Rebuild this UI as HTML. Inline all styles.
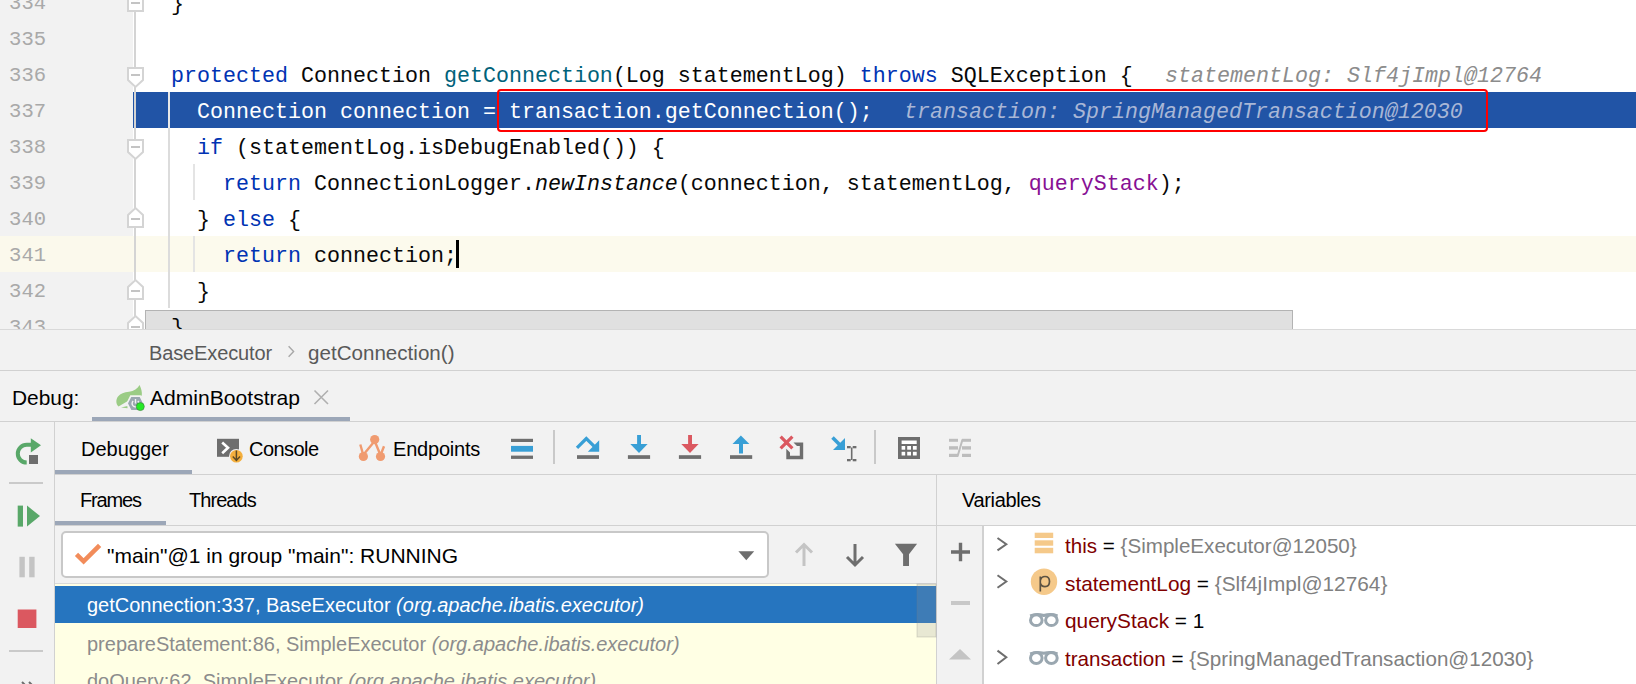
<!DOCTYPE html>
<html><head><meta charset="utf-8">
<style>
*{margin:0;padding:0;box-sizing:border-box}
html,body{width:1636px;height:684px;overflow:hidden;background:#f2f2f2}
body{position:relative;font-family:"Liberation Sans",sans-serif;font-size:20px;color:#000}
.a{position:absolute}
.t{position:absolute;white-space:pre;line-height:20px}
/* editor */
#ed{position:absolute;left:0;top:0;width:1636px;height:329px;background:#fff;overflow:hidden}
#gut{position:absolute;left:0;top:0;width:133px;height:329px;background:#f2f2f2}
.ln{position:absolute;left:0;width:46px;text-align:right;font-family:"Liberation Mono",monospace;font-size:20.5px;line-height:36px;color:#a9a9a9;white-space:pre}
.cl{position:absolute;left:171px;font-family:"Liberation Mono",monospace;font-size:21.67px;line-height:36px;color:#080808;white-space:pre}
.k{color:#0033b3}.m{color:#00627a}.f{color:#871094}.i{font-style:italic}
.hint{position:absolute;font-family:"Liberation Mono",monospace;font-size:21.67px;line-height:36px;color:#8c8c8c;font-style:italic;white-space:pre}
</style></head><body>
<div id="ed">
  <div id="gut"></div>
  <!-- caret row -->
  <div class="a" style="left:0;top:236px;width:133px;height:36px;background:#fbf9ec"></div>
  <div class="a" style="left:133px;top:236px;width:1503px;height:36px;background:#fcfaed"></div>
  <!-- execution row -->
  <div class="a" style="left:133px;top:92px;width:1503px;height:36px;background:#2154a6"></div>

  <!-- line numbers -->
  <div class="ln" style="top:-14px">334</div>
  <div class="ln" style="top:22px">335</div>
  <div class="ln" style="top:58px">336</div>
  <div class="ln" style="top:94px">337</div>
  <div class="ln" style="top:130px">338</div>
  <div class="ln" style="top:166px">339</div>
  <div class="ln" style="top:202px">340</div>
  <div class="ln" style="top:238px">341</div>
  <div class="ln" style="top:274px">342</div>
  <div class="ln" style="top:310px">343</div>

  <!-- code -->
  <div class="cl" style="top:-13px">}</div>
  <div class="cl" style="top:59px"><span class="k">protected</span> Connection <span class="m">getConnection</span>(Log statementLog) <span class="k">throws</span> SQLException {</div>
  <div class="hint" style="left:1165px;top:59px">statementLog: Slf4jImpl@12764</div>
  <div class="cl" style="top:95px;color:#fff">  Connection connection = transaction.getConnection();</div>
  <div class="hint" style="left:904px;top:95px;color:#a9b7d6">transaction: SpringManagedTransaction@12030</div>
  <div class="cl" style="top:131px">  <span class="k">if</span> (statementLog.isDebugEnabled()) {</div>
  <div class="cl" style="top:167px">    <span class="k">return</span> ConnectionLogger.<span class="i">newInstance</span>(connection, statementLog, <span class="f">queryStack</span>);</div>
  <div class="cl" style="top:203px">  } <span class="k">else</span> {</div>
  <div class="cl" style="top:239px">    <span class="k">return</span> connection;</div>
  <div class="cl" style="top:275px">  }</div>
  <div class="cl" style="top:311px">}</div>

  
<!-- gutter fold outline -->
<div class="a" style="left:134px;top:0;width:2px;height:325px;background:#d4d4d4"></div>
<svg class="a" style="left:0;top:0" width="160" height="329" viewBox="0 0 160 329">
  <g fill="#fff" stroke="#d4d4d4" stroke-width="2">
    <!-- 334 end marker (up) -->
    <path d="M128 -6 L135 -13 L143 -6 L143 11 L128 11 Z"/>
    <!-- 336 start (down) -->
    <path d="M128 68 L143 68 L143 80 L135.5 87 L128 80 Z"/>
    <!-- 338 start (down) -->
    <path d="M128 140 L143 140 L143 152 L135.5 159 L128 152 Z"/>
    <!-- 340 end (up) -->
    <path d="M128 227 L128 215 L135.5 208 L143 215 L143 227 Z"/>
    <!-- 342 end (up) -->
    <path d="M128 299 L128 287 L135.5 280 L143 287 L143 299 Z"/>
    <!-- 343 end (up) -->
    <path d="M128 335 L128 323 L135.5 316 L143 323 L143 335 Z"/>
  </g>
  <g stroke="#c4c4c4" stroke-width="2">
    <path d="M131 3 H140"/><path d="M131 75 H140"/><path d="M131 147 H140"/>
    <path d="M131 219 H140"/><path d="M131 291 H140"/><path d="M131 327 H140"/>
  </g>
</svg>

  
<!-- indent guides -->
<div class="a" style="left:168px;top:92px;width:2px;height:216px;background:#dcdcdc"></div>
<div class="a" style="left:168px;top:92px;width:2px;height:36px;background:#e8e8e8"></div>
<div class="a" style="left:193px;top:164px;width:2px;height:36px;background:#e4e4e4"></div>
<div class="a" style="left:193px;top:236px;width:2px;height:36px;background:#e4e4e4"></div>

  <!-- caret -->
  <div class="a" style="left:456px;top:240px;width:3px;height:28px;background:#000"></div>

  <!-- red annotation box -->
  <div class="a" style="left:497px;top:89px;width:991px;height:43px;border:2px solid #ff0000;border-radius:4px"></div>

  <!-- scrollbar thumb -->
  <div class="a" style="left:145px;top:310px;width:1148px;height:19px;background:rgba(0,0,0,0.12);border:1px solid rgba(0,0,0,0.2);border-bottom:none"></div>
</div>
<div class="a" style="left:0;top:329px;width:1636px;height:1px;background:#d9d9d9"></div>

<!-- breadcrumbs -->
<div class="t" style="left:149px;top:343px;color:#595959;letter-spacing:-0.12px">BaseExecutor</div>
<div class="t" style="left:308px;top:343px;color:#595959;font-size:20.6px">getConnection()</div>
<div class="a" style="left:0;top:370px;width:1636px;height:1px;background:#d1d1d1"></div>


<!-- Debug tab bar -->
<div class="t" style="left:12px;top:388px;font-size:20.9px">Debug:</div>
<svg class="a" style="left:112px;top:382px" width="36" height="32" viewBox="0 0 36 32">
  <path d="M27.6 2.9 C29.5 7 30.2 10 29.8 13.5 L15 19.5 L6.5 24.5 C4 22 3.5 18 6 14.5 C8.5 11.5 12 10.5 17 9.8 C22 8.8 25.5 6.5 27.6 2.9 Z" fill="#9bcc85"/>
  <path d="M9 25.6 L15.5 24 L15.5 26.2 Z" fill="#9bcc85"/>
  <path d="M15.1 21.4 L18.8 14.1 L28.2 14.1 L31.8 21.4 L28.2 28.7 L18.8 28.7 Z" fill="#9aa7b0" stroke="#f2f2f2" stroke-width="1.6"/>
  <path d="M21.2 19 A3.4 3.4 0 1 0 25.8 19" fill="none" stroke="#f2f2f2" stroke-width="1.4"/>
  <path d="M23.5 17 V21.5" stroke="#f2f2f2" stroke-width="1.4"/>
  <circle cx="28.3" cy="24.6" r="4" fill="#25ea25" stroke="#3a7a3a" stroke-width="0.6"/>
</svg>
<div class="t" style="left:150px;top:388px;font-size:21.1px">AdminBootstrap</div>
<svg class="a" style="left:313px;top:389px" width="17" height="17" viewBox="0 0 17 17"><path d="M1.5 1.5 L15 15 M15 1.5 L1.5 15" stroke="#b0b0b0" stroke-width="1.6"/></svg>
<div class="a" style="left:92px;top:417px;width:258px;height:4px;background:#9ca7b8"></div>
<div class="a" style="left:0;top:421px;width:1636px;height:1px;background:#d1d1d1"></div>

<!-- left vertical toolbar -->
<div class="a" style="left:54px;top:422px;width:1px;height:262px;background:#d1d1d1"></div>

<!-- tabs row -->
<div class="t" style="left:81px;top:439px">Debugger</div>
<div class="t" style="left:249px;top:439px;letter-spacing:-0.55px">Console</div>
<div class="t" style="left:393px;top:439px;letter-spacing:-0.2px">Endpoints</div>
<div class="a" style="left:55px;top:470px;width:137px;height:4px;background:#9ca7b8"></div>
<div class="a" style="left:55px;top:474px;width:1581px;height:1px;background:#d1d1d1"></div>

<!-- frames/threads header -->
<div class="t" style="left:80px;top:490px;letter-spacing:-1.15px">Frames</div>
<div class="t" style="left:189px;top:490px;letter-spacing:-0.95px">Threads</div>
<div class="a" style="left:55px;top:521px;width:111px;height:4px;background:#9ca7b8"></div>
<div class="a" style="left:55px;top:525px;width:1581px;height:1px;background:#d1d1d1"></div>
<div class="a" style="left:936px;top:475px;width:1px;height:209px;background:#d1d1d1"></div>
<div class="t" style="left:962px;top:490px;letter-spacing:-0.35px">Variables</div>

<!-- thread combo -->
<div class="a" style="left:61px;top:531px;width:708px;height:47px;background:#fff;border:2px solid #c8c8c8;border-radius:5px"></div>
<div class="t" style="left:107px;top:546px;font-size:21px">"main"@1 in group "main": RUNNING</div>
<div class="a" style="left:55px;top:583px;width:881px;height:1px;background:#dadada"></div>

<!-- frames list -->
<div class="a" style="left:55px;top:584px;width:881px;height:100px;background:#ffffe4"></div>
<div class="a" style="left:55px;top:586px;width:881px;height:37px;background:#2675bf"></div>
<div class="t" style="left:87px;top:595px;color:#fff">getConnection:337, BaseExecutor <i>(org.apache.ibatis.executor)</i></div>
<div class="t" style="left:87px;top:634px;color:#8c8c8c">prepareStatement:86, SimpleExecutor <i>(org.apache.ibatis.executor)</i></div>
<div class="t" style="left:87px;top:671px;color:#8c8c8c">doQuery:62, SimpleExecutor <i>(org.apache.ibatis.executor)</i></div>

<!-- variables -->
<div class="a" style="left:983px;top:526px;width:653px;height:158px;background:#fff"></div>
<div class="a" style="left:982px;top:526px;width:2px;height:158px;background:#d1d1d1"></div>
<div class="t" style="left:1065px;top:536px;color:#800000;font-size:20.6px">this <span style="color:#000">=</span> <span style="color:#808080">{SimpleExecutor@12050}</span></div>
<div class="t" style="left:1065px;top:574px;color:#800000;font-size:20.8px">statementLog <span style="color:#000">=</span> <span style="color:#808080">{Slf4jImpl@12764}</span></div>
<div class="t" style="left:1065px;top:611px;color:#800000;font-size:20.8px">queryStack <span style="color:#000">= 1</span></div>
<div class="t" style="left:1065px;top:649px;color:#800000;font-size:20.6px">transaction <span style="color:#000">=</span> <span style="color:#808080">{SpringManagedTransaction@12030}</span></div>


<!-- icon overlay -->
<svg class="a" style="left:0;top:0" width="1636" height="684" viewBox="0 0 1636 684">
  <!-- breadcrumb chevron -->
  <path d="M288.6 346.3 L293.6 351.5 L288.6 356.7" fill="none" stroke="#a8a8a8" stroke-width="1.4"/>

  <!-- rerun -->
  <path d="M31.5 444.8 H26.7 A8.9 8.9 0 0 0 26.7 462.6" fill="none" stroke="#59a869" stroke-width="4"/>
  <path d="M30.8 438.2 L41 445.3 L30.8 452.5 Z" fill="#59a869"/>
  <rect x="29" y="455" width="9" height="9" fill="#6e6e6e"/>
  <rect x="9" y="482" width="34" height="2" fill="#cacaca"/>
  <!-- resume -->
  <rect x="17.7" y="505.6" width="5.3" height="21" fill="#59a869"/>
  <path d="M27 505.6 L40 516 L27 526.5 Z" fill="#59a869"/>
  <!-- pause -->
  <rect x="19.4" y="556.8" width="5.4" height="20.5" fill="#c4c4c4"/>
  <rect x="29.2" y="556.8" width="5.4" height="20.5" fill="#c4c4c4"/>
  <!-- stop -->
  <rect x="17.7" y="609.5" width="18.7" height="18.5" fill="#db5860"/>
  <rect x="9" y="650" width="34" height="2" fill="#cacaca"/>
  <!-- >> -->
  <path d="M22 682 L26 686 M29 682 L33 686" stroke="#6e6e6e" stroke-width="2"/>

  <!-- console icon -->
  <rect x="217" y="438.8" width="22" height="18" fill="#6e6e6e"/>
  <path d="M222.2 442.5 L228 447.8 L222.2 453.2" fill="none" stroke="#fff" stroke-width="2.6"/>
  <circle cx="236.4" cy="456.3" r="7.4" fill="#f2f2f2"/>
  <circle cx="236.4" cy="456.3" r="6.3" fill="#f4af3d"/>
  <path d="M236.4 450.5 V460.3 M232.8 456.6 L236.4 460.4 L240 456.6" fill="none" stroke="#5c4a26" stroke-width="1.5"/>

  <!-- endpoints icon -->
  <g fill="#f09b70" stroke="#f09b70">
    <circle cx="374.7" cy="439.6" r="4.6" stroke="none"/>
    <circle cx="363.4" cy="456.5" r="4.6" stroke="none"/>
    <circle cx="380.5" cy="456.5" r="4.6" stroke="none"/>
    <path d="M374.7 441 L364 454 M374.7 441 L380 454 M360.3 444.5 L363 454 M384 446.3 L381 454" stroke-width="2.4" fill="none"/>
  </g>

  <!-- hamburger -->
  <rect x="511" y="438.8" width="22" height="3.2" fill="#6e6e6e"/>
  <rect x="511" y="445.9" width="22" height="5.8" fill="#389fd6"/>
  <rect x="511" y="455.6" width="22" height="3.3" fill="#6e6e6e"/>
  <rect x="553" y="430" width="2" height="34" fill="#c9c9c9"/>

  <!-- step over -->
  <path d="M577 447.8 L586.3 438.5 L594.5 446.7" fill="none" stroke="#389fd6" stroke-width="3.3"/>
  <path d="M599.2 440.2 L599.2 451.8 L587.8 451.8 Z" fill="#389fd6"/>
  <rect x="577" y="455.2" width="22" height="3.7" fill="#6e6e6e"/>

  <!-- step into -->
  <rect x="637.1" y="435" width="3.9" height="10" fill="#389fd6"/>
  <path d="M630.3 444.1 L647.6 444.1 L639 452.9 Z" fill="#389fd6"/>
  <rect x="627.9" y="455.2" width="22.2" height="3.7" fill="#6e6e6e"/>

  <!-- force step into -->
  <rect x="688.1" y="435" width="3.9" height="10" fill="#db5860"/>
  <path d="M681.3 444.1 L698.6 444.1 L690 452.9 Z" fill="#db5860"/>
  <rect x="678.9" y="455.2" width="22.2" height="3.7" fill="#6e6e6e"/>

  <!-- step out -->
  <path d="M732.5 444.1 L749.4 444.1 L740.9 435.6 Z" fill="#389fd6"/>
  <rect x="739" y="443.5" width="4" height="10" fill="#389fd6"/>
  <rect x="730" y="455.2" width="22.2" height="3.7" fill="#6e6e6e"/>

  <!-- drop frame -->
  <path d="M793.5 442.5 L803.2 442.5 L803.2 459.2 L786.3 459.2 L786.3 448.8 L790 452.5 L790 455.8 L799.8 455.8 L799.8 446 L797 446 Z" fill="#6e6e6e"/>
  <path d="M780.6 436.6 L792.4 448.4 M792.4 436.6 L780.6 448.4" stroke="#db5860" stroke-width="3.2"/>

  <!-- run to cursor -->
  <path d="M832.5 437.5 L840 445" stroke="#389fd6" stroke-width="3.6"/>
  <path d="M845 438 L845 450 L833 450 Z" fill="#389fd6"/>
  <g fill="#6e6e6e"><rect x="847" y="446" width="3.7" height="2.3"/><rect x="852.7" y="446" width="3.7" height="2.3"/><rect x="850.9" y="447.5" width="1.6" height="12.5"/><rect x="847" y="459" width="3.7" height="2.3"/><rect x="852.7" y="459" width="3.7" height="2.3"/></g>
  <rect x="874" y="430" width="2" height="34" fill="#c9c9c9"/>

  <!-- calculator -->
  <rect x="898" y="437" width="22" height="22" fill="#6e6e6e"/>
  <rect x="901.6" y="440.5" width="15.1" height="3.5" fill="#fff"/>
  <g fill="#fff">
    <rect x="901.6" y="446" width="3.6" height="3.7"/><rect x="907.2" y="446" width="3.8" height="3.7"/><rect x="912.9" y="446" width="3.8" height="3.7"/>
    <rect x="901.6" y="451.8" width="3.6" height="3.7"/><rect x="907.2" y="451.8" width="3.8" height="3.7"/><rect x="912.9" y="451.8" width="3.8" height="3.7"/>
  </g>

  <!-- trace (disabled) -->
  <g fill="#bdbdbd">
    <rect x="949" y="438.8" width="9" height="3"/><rect x="962" y="438.8" width="9" height="3"/>
    <rect x="949" y="446.2" width="9" height="3.4"/><rect x="962" y="446.2" width="9" height="3.4"/>
    <rect x="949" y="453.8" width="9" height="3.2"/><rect x="962" y="453.8" width="9" height="3.2"/>
  </g>
  <path d="M962.5 439.5 L957.5 456.5" stroke="#bdbdbd" stroke-width="2"/>

  <!-- checkmark -->
  <path d="M76.5 554.3 L83.6 561.3 L99.6 545.3" fill="none" stroke="#f28c5a" stroke-width="4.6"/>
  <!-- dropdown arrow -->
  <path d="M738.4 551.2 L754.2 551.2 L746.3 560.3 Z" fill="#6e6e6e"/>
  <!-- up arrow disabled -->
  <path d="M804 546 V566 M796 552.5 L804 544.5 L812 552.5" fill="none" stroke="#c4c4c4" stroke-width="3"/>
  <!-- down arrow -->
  <path d="M855 544 V564 M847 557 L855 565 L863 557" fill="none" stroke="#6e6e6e" stroke-width="3"/>
  <!-- filter -->
  <path d="M894.9 543.8 L917.1 543.8 L909 554.3 L909 566 L903.1 566 L903.1 554.3 Z" fill="#6e6e6e"/>

  <!-- frames scroll thumb -->
  <rect x="917" y="584" width="19" height="53" fill="rgba(150,150,150,0.22)" stroke="rgba(120,120,120,0.25)" stroke-width="1"/>

  <!-- variables toolbar -->
  <path d="M951 552 H970 M960.5 542.8 V561.2" stroke="#6e6e6e" stroke-width="3.4"/>
  <path d="M951 603 H970" stroke="#c8c8c8" stroke-width="4"/>
  <path d="M949 659.6 L971 659.6 L960 649 Z" fill="#c4c4c4"/>

  <!-- var chevrons -->
  <g fill="none" stroke="#6e6e6e" stroke-width="2">
    <path d="M997.5 538 L1006.3 544.2 L997.5 550.4"/>
    <path d="M997.5 575.3 L1006.3 581.5 L997.5 587.7"/>
    <path d="M997.5 650.6 L1006.3 657.3 L997.5 664"/>
  </g>
  <!-- this icon -->
  <g fill="#f5c98a">
    <rect x="1034.7" y="532.7" width="18.5" height="5.3"/>
    <rect x="1034.7" y="540.3" width="18.5" height="5.4"/>
    <rect x="1034.7" y="547.8" width="18.5" height="5.5"/>
  </g>
  <!-- p icon -->
  <circle cx="1044" cy="581.7" r="13.2" fill="#f5c98a"/>
  <path d="M1040.3 576.5 V591.5 M1040.3 580.6 C1041 577.5 1043 576.5 1045 576.5 C1048 576.5 1049.5 578.7 1049.5 581.6 C1049.5 584.7 1047.8 586.7 1045 586.7 C1043 586.7 1041 585.7 1040.3 583" fill="none" stroke="#5d5343" stroke-width="1.7"/>
  <!-- glasses -->
  <g fill="none" stroke="#9aa7b0" stroke-width="3">
    <ellipse cx="1036.3" cy="620.2" rx="5.8" ry="5.4"/>
    <ellipse cx="1051.4" cy="620.2" rx="5.8" ry="5.4"/>
    <path d="M1030.2 616 Q1036 613.5 1043.8 615.5 Q1051 613.5 1057.5 616"/>
    <ellipse cx="1036.3" cy="658" rx="5.8" ry="5.4"/>
    <ellipse cx="1051.4" cy="658" rx="5.8" ry="5.4"/>
    <path d="M1030.2 653.8 Q1036 651.3 1043.8 653.3 Q1051 651.3 1057.5 653.8"/>
  </g>
</svg>

</body></html>
